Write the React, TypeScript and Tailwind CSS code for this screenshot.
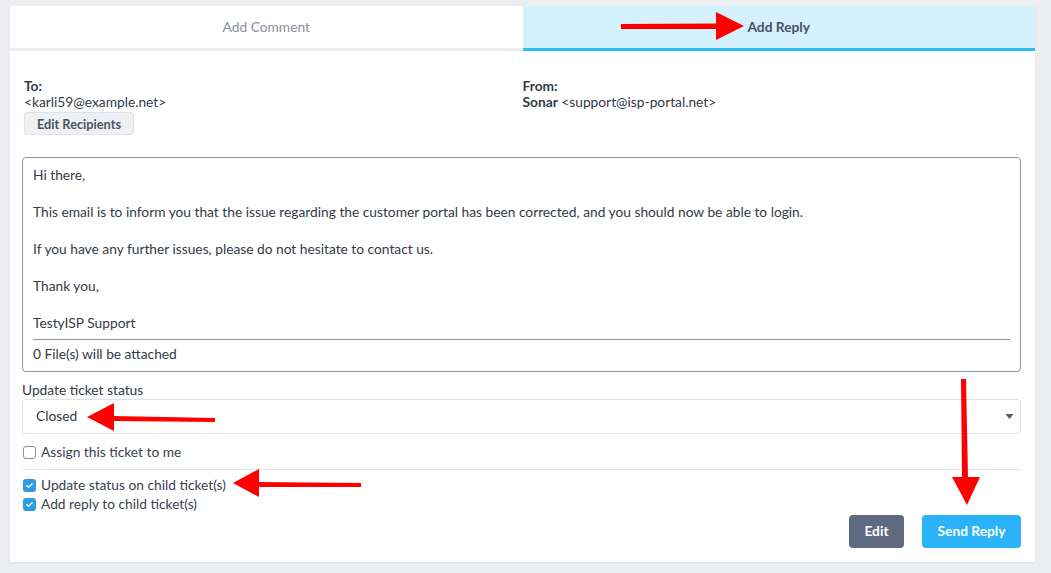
import { ReactNode } from "react";

const font = { fontFamily: "Lato, 'Noto Sans', sans-serif" };

const CheckBox = ({ checked }: { checked?: boolean }) =>
  checked ? (
    <span className="flex h-[13px] w-[13px] items-center justify-center rounded-[3px] bg-[#2b9de0]">
      <svg viewBox="0 0 12 12" className="h-[9px] w-[9px]">
        <path d="M2.5 6.2l2.3 2.3 4.7-4.9" fill="none" stroke="white" strokeWidth="1.8" strokeLinecap="round" strokeLinejoin="round" />
      </svg>
    </span>
  ) : (
    <span className="h-[13px] w-[13px] rounded-[3px] border border-[#8b8f96] bg-white" />
  );

const CheckRow = ({ checked, children }: { checked?: boolean; children: ReactNode }) => (
  <label className="flex h-[19px] items-center gap-[5px] pl-px text-[13.75px] text-[#3a4150]">
    <CheckBox checked={checked} />
    <span>{children}</span>
  </label>
);

const Arrows = () => (
  <svg className="pointer-events-none absolute left-0 top-0" width="1051" height="573" viewBox="0 0 1051 573">
    <g fill="#ff0000">
      {/* Add Reply tab */}
      <polygon points="621,24 718,23.5 718,29 621,29" />
      <polygon points="716,12 744,26 716,40" />
      {/* Closed */}
      <polygon points="113,416 215,418 215,422 113,421" />
      <polygon points="87,417 114,403 114,431" />
      {/* child tickets */}
      <polygon points="258,482 361,483 361,487 258,487" />
      <polygon points="233,483 259,469 259,497" />
      {/* Send Reply */}
      <polygon points="961,379 966,379 968,478 962,478" />
      <polygon points="952,477 980,477 967,505" />
    </g>
  </svg>
);

export default function App() {
  return (
    <div className="relative h-[573px] w-[1051px] overflow-hidden bg-[#edeef2]" style={font}>
      <div className="ml-[10px] mt-[6px] flex h-[556px] w-[1025px] flex-col bg-white shadow-[0_1px_2px_rgba(0,0,0,0.08)]">
        <div className="grid h-[45px] grid-cols-2">
          <div className="flex items-center justify-center border-b-[3px] border-[#eceef1] text-[13.75px] text-[#8a9099]">
            Add Comment
          </div>
          <div className="flex items-center justify-center border-b-[3px] border-[#2bbcf6] bg-[#d4f1fd] text-[13.75px] font-bold text-[#4a5261]">
            Add Reply
          </div>
        </div>

        <div className="flex flex-1 flex-col pl-3 pr-[14px] pt-[27px] text-[13.75px] text-[#333a46]">
          <div className="grid grid-cols-2 leading-4">
            <div className="pl-[2px]">
              <div className="font-bold">To:</div>
              <div>&lt;karli59@example.net&gt;</div>
              <button className="mt-[2px] h-[23px] w-[110px] rounded-[3px] border border-[#e0e2e6] bg-[#eef0f3] text-[12.75px] font-bold text-[#4a5261]">
                Edit Recipients
              </button>
            </div>
            <div className="pl-px">
              <div className="font-bold">From:</div>
              <div>
                <span className="font-bold">Sonar</span> &lt;support@isp-portal.net&gt;
              </div>
            </div>
          </div>

          <div className="mt-[22px] flex h-[215px] flex-col rounded-[4px] border border-[#8d97a4] px-[10px] pb-[9px] pt-[9px] leading-4">
            <div className="flex flex-col gap-[21px]">
              <p>Hi there,</p>
              <p>This email is to inform you that the issue regarding the customer portal has been corrected, and you should now be able to login.</p>
              <p>If you have any further issues, please do not hesitate to contact us.</p>
              <p>Thank you,</p>
              <p>TestyISP Support</p>
            </div>
            <div className="mt-auto border-t border-[#8d97a4] pt-[6px]">0 File(s) will be attached</div>
          </div>

          <div className="mt-[10px] leading-4">Update ticket status</div>
          <div className="mt-px flex h-[35px] items-center justify-between rounded-[4px] border border-[#dfe2e6] pl-[13px] pr-[6px]">
            <span>Closed</span>
            <svg viewBox="0 0 10 6" className="h-[5px] w-[9px]">
              <path d="M0 0h10L5 6z" fill="#575e69" />
            </svg>
          </div>

          <div className="mt-[9px]">
            <CheckRow>Assign this ticket to me</CheckRow>
          </div>
          <div className="mt-[7px] border-t border-[#e3e5e8] pt-[6px]">
            <CheckRow checked>Update status on child ticket(s)</CheckRow>
            <CheckRow checked>Add reply to child ticket(s)</CheckRow>
          </div>

          <div className="mt-[1px] flex justify-end gap-[18px]">
            <button className="h-[33px] w-[55px] rounded-[4px] bg-[#5f6a80] text-[13.75px] font-bold text-white">Edit</button>
            <button className="h-[33px] w-[99px] rounded-[4px] bg-[#2bb3fa] text-[13.75px] font-bold text-white">Send Reply</button>
          </div>
        </div>
      </div>
      <Arrows />
    </div>
  );
}
